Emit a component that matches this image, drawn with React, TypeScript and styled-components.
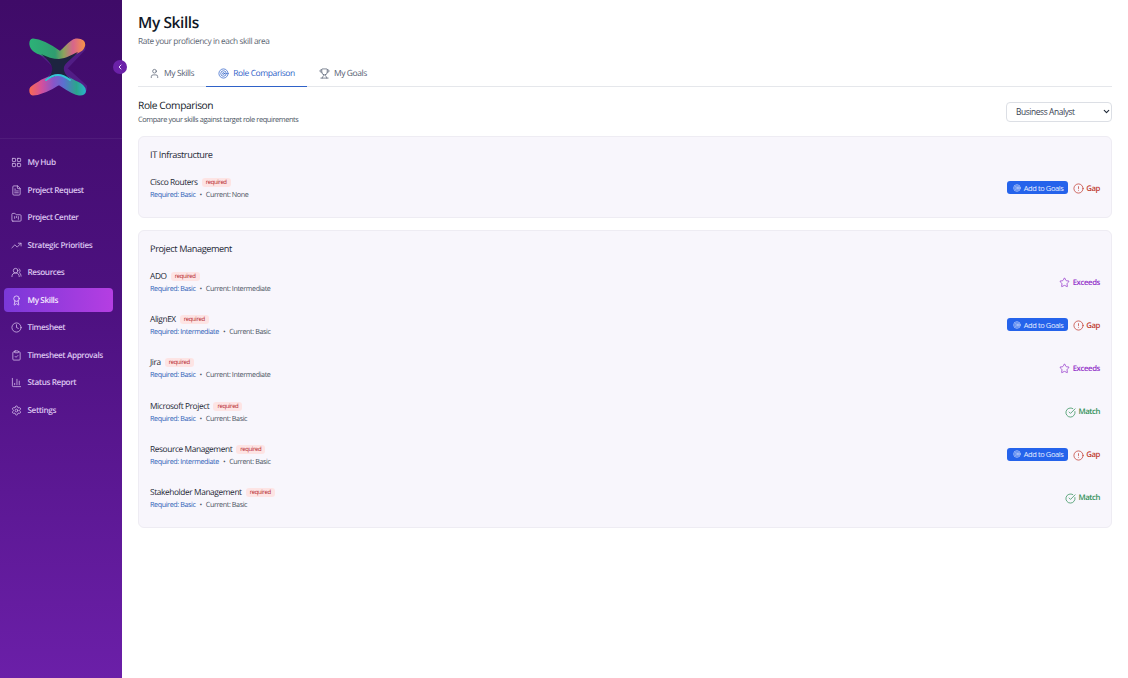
import React from 'react'
import styled, { createGlobalStyle } from 'styled-components'
import {
  Award,
  ChartColumn,
  ChevronDown,
  ChevronLeft,
  CircleAlert,
  CircleCheckBig,
  ClipboardCheck,
  Clock,
  FileText,
  FolderKanban,
  LayoutGrid,
  Settings,
  Star,
  Target,
  TrendingUp,
  Trophy,
  User,
  UsersRound
} from 'lucide-react'

const GlobalStyle = createGlobalStyle`
  html, body { margin: 0; padding: 0; height: 100%; background: #fff; }
  body {
    font-family: "Open Sans", "Noto Sans", sans-serif;
    color: #111827;
    text-rendering: geometricPrecision;
    letter-spacing: -0.025em;
  }
  #root { height: 100%; }
  * { box-sizing: border-box; }
`

const navItems = [
  { label: 'My Hub', icon: LayoutGrid },
  { label: 'Project Request', icon: FileText },
  { label: 'Project Center', icon: FolderKanban },
  { label: 'Strategic Priorities', icon: TrendingUp },
  { label: 'Resources', icon: UsersRound },
  { label: 'My Skills', icon: Award, active: true },
  { label: 'Timesheet', icon: Clock },
  { label: 'Timesheet Approvals', icon: ClipboardCheck },
  { label: 'Status Report', icon: ChartColumn },
  { label: 'Settings', icon: Settings }
]

type Status = 'gap' | 'exceeds' | 'match'
type Skill = { name: string; required: string; current: string; status: Status }

const groups: { title: string; skills: Skill[] }[] = [
  {
    title: 'IT Infrastructure',
    skills: [{ name: 'Cisco Routers', required: 'Basic', current: 'None', status: 'gap' }]
  },
  {
    title: 'Project Management',
    skills: [
      { name: 'ADO', required: 'Basic', current: 'Intermediate', status: 'exceeds' },
      { name: 'AlignEX', required: 'Intermediate', current: 'Basic', status: 'gap' },
      { name: 'Jira', required: 'Basic', current: 'Intermediate', status: 'exceeds' },
      { name: 'Microsoft Project', required: 'Basic', current: 'Basic', status: 'match' },
      { name: 'Resource Management', required: 'Intermediate', current: 'Basic', status: 'gap' },
      { name: 'Stakeholder Management', required: 'Basic', current: 'Basic', status: 'match' }
    ]
  }
]

const statusInfo = {
  gap: { label: 'Gap', icon: CircleAlert, color: '#c0392f' },
  exceeds: { label: 'Exceeds', icon: Star, color: '#9333c9' },
  match: { label: 'Match', icon: CircleCheckBig, color: '#2f8f57' }
}

const Logo = () => (
  <svg width="58" height="58" viewBox="0 0 58 58" fill="none">
    <defs>
      <linearGradient id="topBand" x1="0" y1="0" x2="58" y2="0" gradientUnits="userSpaceOnUse">
        <stop offset="0" stopColor="#2cb277" />
        <stop offset="0.45" stopColor="#2f9d70" />
        <stop offset="0.6" stopColor="#8ea35c" />
        <stop offset="0.76" stopColor="#d8648c" />
        <stop offset="1" stopColor="#fb9a3c" />
      </linearGradient>
      <linearGradient id="bottomBand" x1="0" y1="0" x2="58" y2="0" gradientUnits="userSpaceOnUse">
        <stop offset="0" stopColor="#fb6a4f" />
        <stop offset="0.22" stopColor="#d2509e" />
        <stop offset="0.42" stopColor="#8a55c8" />
        <stop offset="0.6" stopColor="#5a70d0" />
        <stop offset="0.82" stopColor="#2ba58c" />
        <stop offset="1" stopColor="#2bb4d4" />
      </linearGradient>
    </defs>
    <path d="M10 12 L52 50 M50 10 L12 50" stroke="#5f2d9e" strokeWidth="9" strokeLinecap="round" opacity="0.5" transform="translate(2 0)" />
    <path d="M4 1.5 C12 2 24 9 31 14 C36 11 40 3 47 1.5 C53 1 56 4 55 8 C54 11 52 13 49 14 C42 17 38 20 30 21 C24 21 18 19 12 16 C8 15 2 12 1.5 7 C1 4 2 2 4 1.5 Z" fill="url(#topBand)" stroke="url(#topBand)" strokeWidth="2" strokeLinejoin="round" />
    <path d="M4 56.5 C2 56 1 54 1.5 51 C2 48 8 46 12 43 C18 40 24 37 29 37 C35 37 42 41 47 44 C52 46 56 49 56 53 C56 55 54 57 50 56.5 C44 56 36 50 30 46 C24 50 14 56 4 56.5 Z" fill="url(#bottomBand)" stroke="url(#bottomBand)" strokeWidth="2" strokeLinejoin="round" />
    <path d="M12 16 C18 19 24 21 30 21 C38 20 42 17 49 14 C44 20 36 25 35 29 C34 33 37 38 42 41 L29 37 L16 42 C22 38 24 33 23 29 C22 25 17 20 12 16 Z" fill="#1d2440" />
    <path d="M17 42 C22 38 26 37 29 37 C33 37 37 39 41 42" stroke="#35c6d8" strokeWidth="2" strokeLinecap="round" />
  </svg>
)

export default function App() {
  return (
    <Page>
      <GlobalStyle />
      <Sidebar>
        <LogoArea>
          <Logo />
          <Collapse>
            <ChevronLeft size={8} strokeWidth={3} />
          </Collapse>
        </LogoArea>
        <Nav>
          {navItems.map(item => (
            <NavItem key={item.label} $active={item.active}>
              <item.icon size={11} strokeWidth={1.6} />
              {item.label}
            </NavItem>
          ))}
        </Nav>
      </Sidebar>
      <Main>
        <Title>My Skills</Title>
        <Subtitle>Rate your proficiency in each skill area</Subtitle>
        <Tabs>
          <Tab>
            <User size={11} strokeWidth={1.6} />
            My Skills
          </Tab>
          <Tab $active>
            <Target size={11} strokeWidth={1.6} />
            Role Comparison
          </Tab>
          <Tab>
            <Trophy size={11} strokeWidth={1.6} />
            My Goals
          </Tab>
        </Tabs>
        <SectionHeader>
          <div>
            <SectionTitle>Role Comparison</SectionTitle>
            <SectionSub>Compare your skills against target role requirements</SectionSub>
          </div>
          <SelectWrap>
            <RoleSelect defaultValue="Business Analyst">
              <option>Business Analyst</option>
            </RoleSelect>
            <SelectArrow>
              <ChevronDown size={9} strokeWidth={3} />
            </SelectArrow>
          </SelectWrap>
        </SectionHeader>
        {groups.map(group => (
          <Card key={group.title}>
            <CardTitle>{group.title}</CardTitle>
            <Rows>
              {group.skills.map(skill => {
                const info = statusInfo[skill.status]
                return (
                  <Row key={skill.name}>
                    <div>
                      <NameLine>
                        <SkillName>{skill.name}</SkillName>
                        <Badge>required</Badge>
                      </NameLine>
                      <Meta>
                        <RequiredText>Required: {skill.required}</RequiredText>
                        <Dot>•</Dot>
                        <span>Current: {skill.current}</span>
                      </Meta>
                    </div>
                    <Actions>
                      {skill.status === 'gap' && (
                        <GoalButton>
                          <Target size={8} strokeWidth={1.8} />
                          Add to Goals
                        </GoalButton>
                      )}
                      <StatusLabel $color={info.color}>
                        <info.icon size={11} strokeWidth={1.6} />
                        {info.label}
                      </StatusLabel>
                    </Actions>
                  </Row>
                )
              })}
            </Rows>
          </Card>
        ))}
      </Main>
    </Page>
  )
}

const Page = styled.div`
  display: flex;
  height: 678px;
  overflow: hidden;
`

const Sidebar = styled.aside`
  width: 122px;
  flex-shrink: 0;
  background: linear-gradient(180deg, #3f0b68 0%, #4d1180 45%, #6b1fa8 100%);
`

const LogoArea = styled.div`
  position: relative;
  height: 139px;
  padding: 38px 0 0 29px;
  border-bottom: 1px solid rgba(255, 255, 255, 0.06);
`

const Collapse = styled.div`
  position: absolute;
  top: 60px;
  right: -5px;
  width: 14px;
  height: 14px;
  border-radius: 50%;
  background: #6b21a8;
  color: #e9d5ff;
  display: flex;
  align-items: center;
  justify-content: center;
`

const Nav = styled.nav`
  display: flex;
  flex-direction: column;
  gap: 3.5px;
  padding: 11.5px 9px 0 4px;
`

const NavItem = styled.div<{ $active?: boolean }>`
  display: flex;
  align-items: center;
  gap: 5.5px;
  height: 24px;
  padding-left: 7px;
  border-radius: 4px;
  font-size: 8.2px;
  font-weight: 600;
  color: ${p => (p.$active ? '#f5eaff' : '#dcc5f0')};
  background: ${p => (p.$active ? 'linear-gradient(90deg, #7a38d8 0%, #b53ee2 100%)' : 'transparent')};
`

const Main = styled.main`
  flex: 1;
  min-width: 0;
  padding: 13px 16px 0;
`

const Title = styled.h1`
  margin: 0;
  font-size: 15.5px;
  line-height: 19px;
  font-weight: 600;
  color: #111827;
`

const Subtitle = styled.p`
  margin: 4px 0 0;
  font-size: 8.3px;
  line-height: 12px;
  color: #5b6472;
`

const Tabs = styled.div`
  display: flex;
  height: 27px;
  margin-top: 12px;
  border-bottom: 1px solid #e5e7eb;
`

const Tab = styled.div<{ $active?: boolean }>`
  display: flex;
  align-items: center;
  gap: 4px;
  padding: 1px 12px 0;
  height: 27px;
  font-size: 8.5px;
  font-weight: 500;
  color: ${p => (p.$active ? '#2f62c8' : '#566072')};
  border-bottom: 1px solid ${p => (p.$active ? '#2f62c8' : 'transparent')};

  &:first-child {
    margin-left: -1px;
  }
`

const SectionHeader = styled.div`
  display: flex;
  justify-content: space-between;
  align-items: center;
  margin: 11px 0 10px;
`

const SectionTitle = styled.h2`
  margin: 0;
  font-size: 10.2px;
  line-height: 14px;
  font-weight: 500;
  color: #111827;
`

const SectionSub = styled.p`
  margin: 3px 0 0;
  font-size: 7.4px;
  line-height: 11px;
  color: #4b5563;
`

const SelectWrap = styled.div`
  position: relative;
  width: 106px;
  height: 20px;
`

const RoleSelect = styled.select`
  display: block;
  width: 100%;
  height: 100%;
  padding: 0 0 2px 9px;
  appearance: none;
  border: 1px solid #dcdfe5;
  border-radius: 4px;
  background: #fff;
  font-family: inherit;
  font-size: 8.4px;
  letter-spacing: inherit;
  color: #374151;
`

const SelectArrow = styled.span`
  position: absolute;
  top: 5px;
  right: 1px;
  display: flex;
  color: #1f2937;
`

const Card = styled.section`
  margin-bottom: 12px;
  padding: 11px 11px 16px;
  background: #f8f6fc;
  border: 1px solid #eeecf3;
  border-radius: 6px;
`

const CardTitle = styled.h3`
  margin: 0 0 14px;
  font-size: 9.2px;
  line-height: 14px;
  font-weight: 500;
  color: #1f2937;
`

const Rows = styled.div`
  display: flex;
  flex-direction: column;
  gap: 18.2px;
`

const Row = styled.div`
  display: flex;
  justify-content: space-between;
  align-items: center;
  height: 25px;
`

const NameLine = styled.div`
  display: flex;
  align-items: center;
  gap: 4px;
  height: 13px;
`

const SkillName = styled.span`
  font-size: 8.35px;
  font-weight: 500;
  color: #1f2937;
`

const Badge = styled.span`
  padding: 0 4px;
  height: 9px;
  line-height: 9px;
  border-radius: 3px;
  background: #fde4e4;
  color: #b4232a;
  font-size: 6px;
`

const Meta = styled.div`
  display: flex;
  align-items: center;
  gap: 3px;
  height: 12px;
  font-size: 7.2px;
  color: #4b5563;
`

const RequiredText = styled.span`
  color: #2f62b8;
`

const Dot = styled.span`
  margin: 0 1px;
`

const Actions = styled.div`
  display: flex;
  align-items: center;
  gap: 5px;
`

const GoalButton = styled.button`
  display: flex;
  align-items: center;
  gap: 3px;
  width: 61px;
  height: 13px;
  margin-bottom: 2px;
  padding: 0 0 0 6px;
  border: 0;
  border-radius: 3px;
  background: #2563eb;
  color: #e6edff;
  font-family: inherit;
  font-size: 7.5px;
  letter-spacing: inherit;
`

const StatusLabel = styled.div<{ $color: string }>`
  display: flex;
  align-items: center;
  gap: 2.5px;
  font-size: 7.8px;
  font-weight: 600;
  color: ${p => p.$color};
`
